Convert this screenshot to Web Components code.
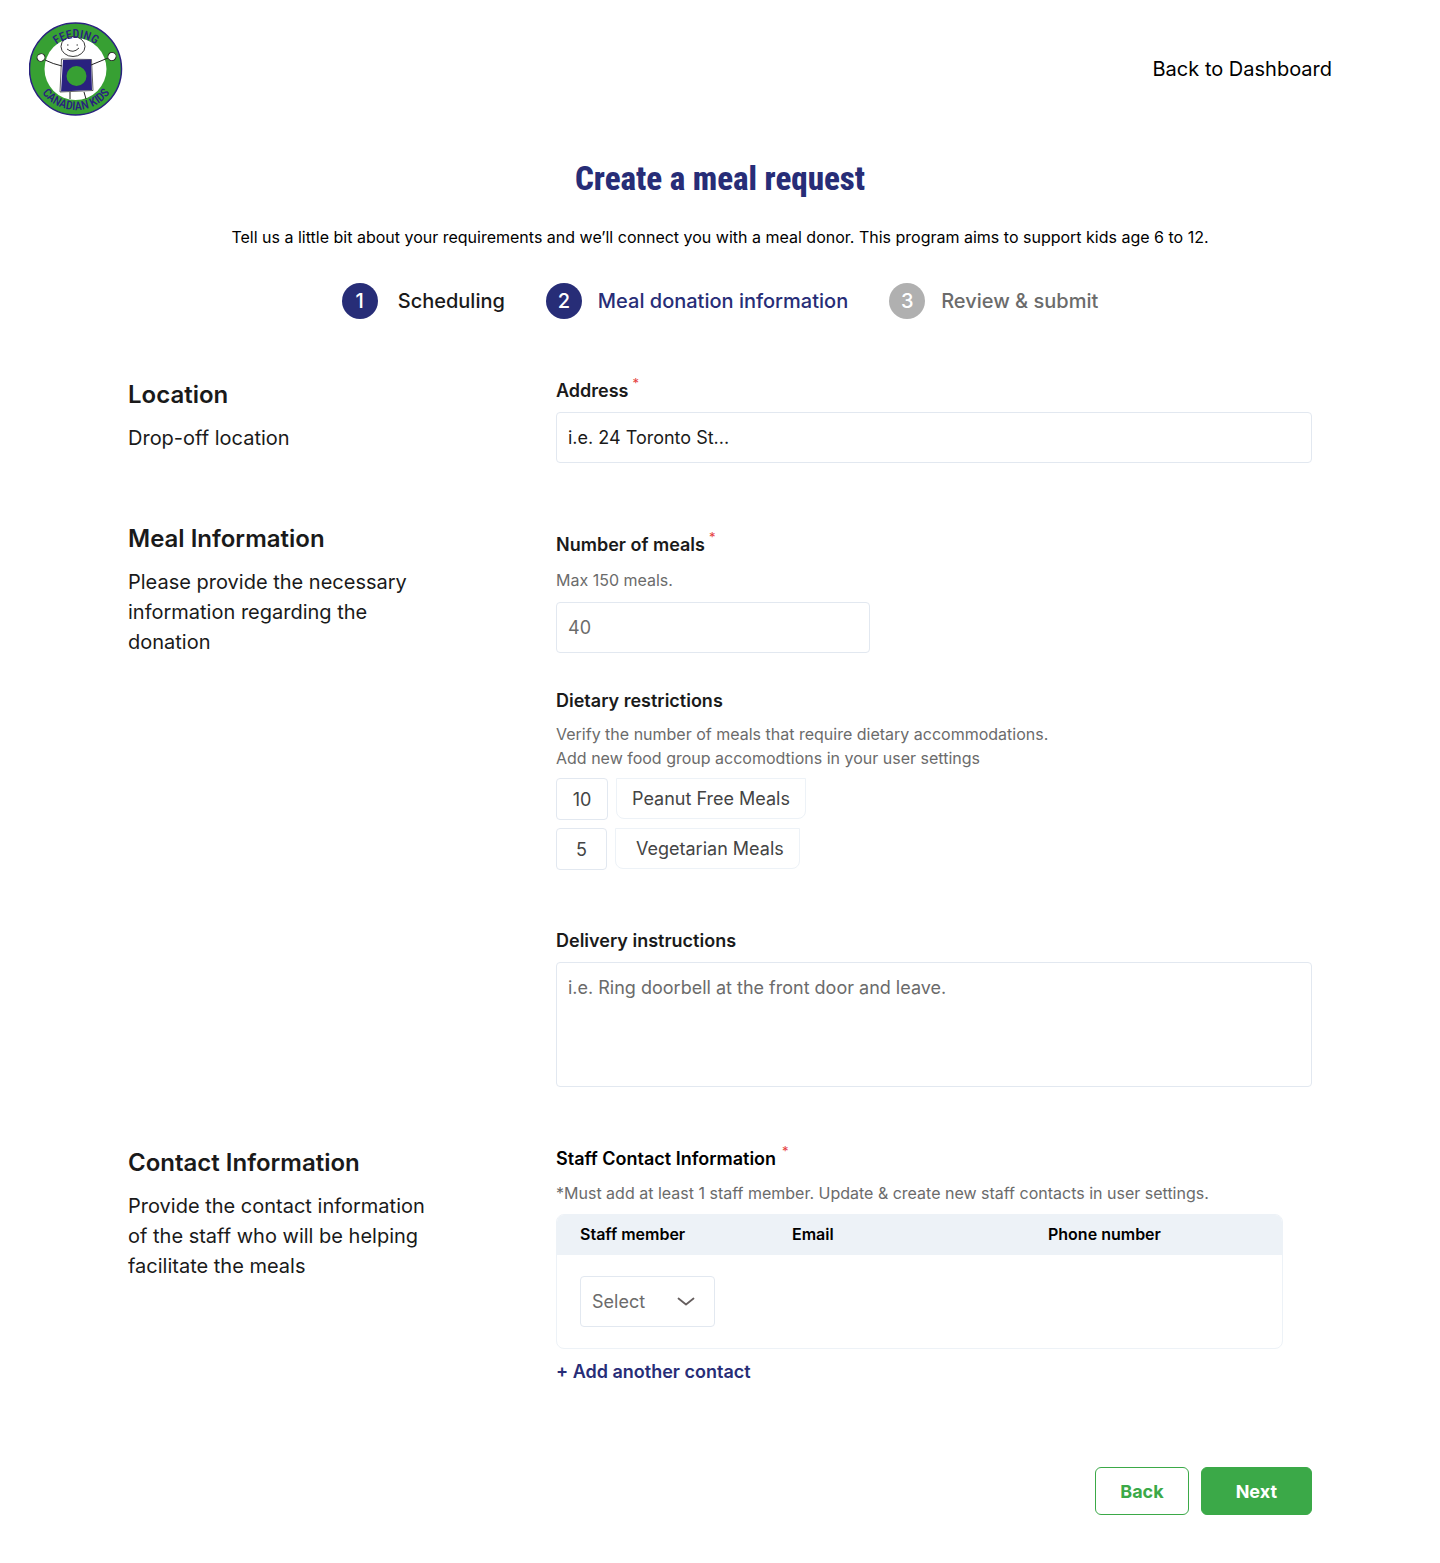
<!DOCTYPE html>
<html lang="en">
<head>
<meta charset="utf-8">
<meta name="viewport" content="width=device-width, initial-scale=1">
<title>Create a meal request</title>
<style>
  :root {
    --navy: #272d77;
    --green: #3ba948;
    --ink: #1a1a1a;
    --muted: #6b6b6b;
    --line: #e2e8f0;
    --soft: #edf2f7;
    --red: #e53e3e;
  }
  body {
    margin: 0;
    background: #fff;
    color: var(--ink);
    font: 400 18px/30px Inter, "Liberation Sans", sans-serif;
  }
</style>
</head>
<body>
<meal-request-page></meal-request-page>

<script>
const define = (name, markup, setup) => {
  const template = document.createElement('template');
  template.innerHTML = `<style>*{box-sizing:border-box}</style>${markup}`;
  customElements.define(name, class extends HTMLElement {
    constructor() {
      super();
      this.attachShadow({ mode: 'open' }).append(template.content.cloneNode(true));
    }
    connectedCallback() {
      if (setup) setup(this, this.shadowRoot);
    }
  });
};

define('kids-logo', `
  <style>
    :host { display: block; width: 94px; height: 94px; }
    svg { display: block; width: 100%; height: 100%; }
    text { font: 500 12px "Roboto Condensed", "Liberation Sans Narrow", "Liberation Sans", sans-serif; fill: #29217f; }
  </style>
  <svg viewBox="0 0 94 94" role="img" aria-label="Feeding Canadian Kids">
    <defs>
      <path id="top" d="M15 48a32 32 0 0 1 64 0"/>
      <path id="bottom" d="M5 46a42 42 0 0 0 84 0"/>
    </defs>
    <circle cx="46.500" cy="47" r="46" fill="#37a033" stroke="#29217f" stroke-width="1.5"/>
    <circle cx="46.500" cy="47" r="31" fill="#fff"/>
    <g fill="none" stroke="#222" stroke-width="1">
      <path d="M16 38q8 4 17 6M62 43l17-7M41 70v7M55 70l2 7"/>
      <path d="M32.500 37l30 .5 1.500 31-33 1.500z" stroke-width=".7"/>
    </g>
    <path d="M34 38l28-.5 1 30.500-31 1.500z" fill="#29217f"/>
    <circle cx="47.500" cy="54" r="10" fill="#37a033"/>
    <g fill="#fff" stroke="#222" stroke-width=".9">
      <ellipse cx="44" cy="24.500" rx="12" ry="10"/>
      <ellipse cx="12" cy="35.500" rx="4" ry="3.700" transform="rotate(-25 12 35.500)"/>
      <ellipse cx="83" cy="34.500" rx="4" ry="4.200" transform="rotate(30 83 34.500)"/>
    </g>
    <path d="M38 27q6 5 12-1M38 23h1.500M47.500 23h1.500" fill="none" stroke="#222" stroke-width=".9"/>
    <text text-anchor="middle"><textPath href="#top" startOffset="50%">FEEDING</textPath></text>
    <text text-anchor="middle"><textPath href="#bottom" startOffset="50%">CANADIAN KIDS</textPath></text>
  </svg>`);

define('site-header', `
  <style>
    :host { display: block; }
    header { display: flex; align-items: center; justify-content: space-between; padding: 22px 108px 22px 29px; }
    a { color: #000; font-size: 20px; line-height: 32px; text-decoration: none; }
  </style>
  <header><kids-logo></kids-logo><a href="#dashboard"><slot></slot></a></header>`);

define('progress-step', `
  <style>
    :host { display: flex; align-items: center; gap: 16px; font-size: 20px; font-weight: 500; color: var(--navy); }
    :host([state=done]) { gap: 20px; color: var(--ink); }
    :host([state=todo]) { color: var(--muted); }
    .dot { display: grid; place-items: center; width: 36px; height: 36px; border-radius: 50%; background: var(--navy); color: #fff; }
    :host([state=todo]) .dot { background: #b0b0b0; }
  </style>
  <span class="dot"></span><span><slot></slot></span>`,
  (host, root) => { root.querySelector('.dot').textContent = host.getAttribute('number'); });

define('form-section', `
  <style>
    :host { display: grid; grid-template-columns: 300px minmax(0, 1fr); column-gap: 128px; align-items: start; }
    h2 { margin: 0 0 9px; font-size: 24px; line-height: 38px; font-weight: 600; }
    p { margin: 0; font-size: 20px; line-height: 30px; }
    .fields { padding-top: var(--fields-top, 0); }
  </style>
  <div><h2></h2><p><slot name="intro"></slot></p></div>
  <div class="fields"><slot></slot></div>`,
  (host, root) => { root.querySelector('h2').textContent = host.getAttribute('heading'); });

const fieldStyles = `
  :host { display: block; }
  .label { display: flex; align-items: flex-start; gap: 4px; font-size: 18px; line-height: 30px; font-weight: 600; }
  .star { font-size: 13px; line-height: 14px; font-weight: 400; color: var(--red); }
  .help { margin: 0; font-size: 16px; line-height: 24px; color: var(--muted); }
  input, textarea, select {
    display: block; margin: 0; width: 100%; height: 51px; padding: 0 11px;
    border: 1px solid var(--line); border-radius: 4px; background: #fff;
    color: var(--hint, var(--muted)); font: inherit; font-size: 18px; outline-color: var(--navy);
  }
  ::placeholder { color: var(--hint, var(--muted)); opacity: 1; }
`;

define('text-field', `
  <style>${fieldStyles}
    :host([help]) .help { margin: 8px 0 10px; }
    :host(:not([help])) .help { display: none; }
    .label { margin-bottom: 6px; }
    :host([help]) .label { margin-bottom: 0; }
    :host(:not([required])) .star { display: none; }
    textarea { height: 125px; padding: 10px 11px; resize: none; line-height: 30px; }
    .box { max-width: var(--box-width, none); }
  </style>
  <label class="label" for="control"><span class="name"></span><span class="star">*</span></label>
  <p class="help"></p>
  <div class="box"></div>`,
  (host, root) => {
    root.querySelector('.name').textContent = host.getAttribute('label');
    root.querySelector('.help').textContent = host.getAttribute('help') || '';
    const control = document.createElement(host.hasAttribute('multiline') ? 'textarea' : 'input');
    control.id = 'control';
    control.placeholder = host.getAttribute('hint');
    control.required = host.hasAttribute('required');
    root.querySelector('.box').replaceChildren(control);
  });

define('diet-row', `
  <style>${fieldStyles}
    :host { display: flex; gap: 8px; align-items: flex-start; color: #444; }
    input { width: 52px; height: 42px; padding: 0; text-align: center; color: #444; }
    label { padding: 5px 15px; height: 41px; line-height: 30px; border: 1px solid var(--soft); border-radius: 0 0 8px 8px; }
    :host([inset]) input { width: 51px; }
    :host([inset]) label { padding-left: 20px; }
  </style>
  <input id="count" inputmode="numeric"><label for="count"><slot></slot></label>`,
  (host, root) => { root.querySelector('input').value = host.getAttribute('count'); });

define('diet-group', `
  <style>${fieldStyles}
    :host { margin: 33px 0 56px; }
    .help { margin: 6px 0 8px; }
    .rows { display: grid; gap: 8px; }
  </style>
  <div class="label">Dietary restrictions</div>
  <p class="help">Verify the number of meals that require dietary accommodations.<br>Add new food group accomodtions in your user settings</p>
  <div class="rows"><slot></slot></div>`);

define('staff-contacts', `
  <style>${fieldStyles}
    .label { color: #000; gap: 6px; }
    .help { margin: 7px 0 9px; }
    .frame { max-width: 727px; border: 1px solid var(--soft); border-radius: 8px; overflow: hidden; }
    table { width: 100%; border-collapse: collapse; table-layout: fixed; }
    th { height: 40px; padding: 0 0 2px; background: var(--soft); color: #000; font-size: 16px; line-height: 24px; font-weight: 600; text-align: left; }
    th:first-child, td:first-child { padding-left: 23px; }
    th:nth-child(1) { width: 235px; }
    th:nth-child(2) { width: 256px; }
    td { padding: 21px 0; }
    .pick { display: grid; grid-template-columns: 135px; align-items: center; }
    .pick > * { grid-area: 1 / 1; }
    select { appearance: none; }
    svg { justify-self: end; width: 18px; height: 10px; margin-right: 20px; pointer-events: none; }
    button { display: block; margin: 8px 0 0; padding: 0; border: 0; background: none; color: var(--navy); font: inherit; font-weight: 600; cursor: pointer; }
  </style>
  <div class="label"><span>Staff Contact Information</span><span class="star">*</span></div>
  <p class="help">*Must add at least 1 staff member. Update &amp; create new staff contacts in user settings.</p>
  <div class="frame">
    <table>
      <thead><tr><th id="staff">Staff member</th><th>Email</th><th>Phone number</th></tr></thead>
      <tbody><tr>
        <td><div class="pick">
          <select aria-labelledby="staff"><option>Select</option></select>
          <svg viewBox="0 0 18 10" aria-hidden="true"><path d="M1.500 1.500L9 7.500l7.500-6" fill="none" stroke="#655e5e" stroke-width="1.800" stroke-linecap="round" stroke-linejoin="round"/></svg>
        </div></td><td></td><td></td>
      </tr></tbody>
    </table>
  </div>
  <button type="button">+ Add another contact</button>`);

define('action-button', `
  <style>
    :host { display: block; }
    button { height: 48px; padding: 2px 24px 0; border: 1px solid var(--green); border-radius: 6px; background: #fff; color: var(--green); font: inherit; font-size: 18px; font-weight: 700; cursor: pointer; }
    :host([primary]) button { padding: 2px 34px 0; background: var(--green); color: #fff; }
  </style>
  <button type="button"><slot></slot></button>`);

define('meal-request-page', `
  <style>
    :host { display: block; }
    main { padding: 0 128px 48px; }
    h1 { margin: 17px 0 0; color: var(--navy); text-align: center; font: 800 33px/48px "Roboto Condensed", "Liberation Sans Narrow", "Liberation Sans", sans-serif; }
    .lead { margin: 22px 0 34px; text-align: center; font-size: 16px; line-height: 24px; color: #000; }
    .steps { display: flex; flex-wrap: wrap; justify-content: center; gap: 41px; margin-bottom: 57px; }
    form { display: grid; gap: 57px; }
    .dark { --hint: var(--ink); }
    .meal { --fields-top: 10px; }
    .short { --box-width: 314px; }
    .actions { display: flex; justify-content: flex-end; gap: 12px; margin-top: 23px; }
  </style>
  <site-header>Back to Dashboard</site-header>
  <main>
    <h1>Create a meal request</h1>
    <p class="lead">Tell us a little bit about your requirements and we’ll connect you with a meal donor. This program aims to support kids age 6 to 12.</p>
    <nav class="steps" aria-label="Progress">
      <progress-step number="1" state="done">Scheduling</progress-step>
      <progress-step number="2" state="current">Meal donation information</progress-step>
      <progress-step number="3" state="todo">Review &amp; submit</progress-step>
    </nav>
    <form>
      <form-section heading="Location">
        <span slot="intro">Drop-off location</span>
        <text-field class="dark" label="Address" hint="i.e. 24 Toronto St..." required></text-field>
      </form-section>
      <form-section class="meal" heading="Meal Information">
        <span slot="intro">Please provide the necessary information regarding the donation</span>
        <text-field class="short" label="Number of meals" help="Max 150 meals." hint="40" required></text-field>
        <diet-group>
          <diet-row count="10">Peanut Free Meals</diet-row>
          <diet-row count="5" inset>Vegetarian Meals</diet-row>
        </diet-group>
        <text-field label="Delivery instructions" hint="i.e. Ring doorbell at the front door and leave." multiline></text-field>
      </form-section>
      <form-section heading="Contact Information">
        <span slot="intro">Provide the contact information of the staff who will be helping facilitate the meals</span>
        <staff-contacts></staff-contacts>
      </form-section>
      <div class="actions">
        <action-button>Back</action-button>
        <action-button primary>Next</action-button>
      </div>
    </form>
  </main>`);
</script>
</body>
</html>
